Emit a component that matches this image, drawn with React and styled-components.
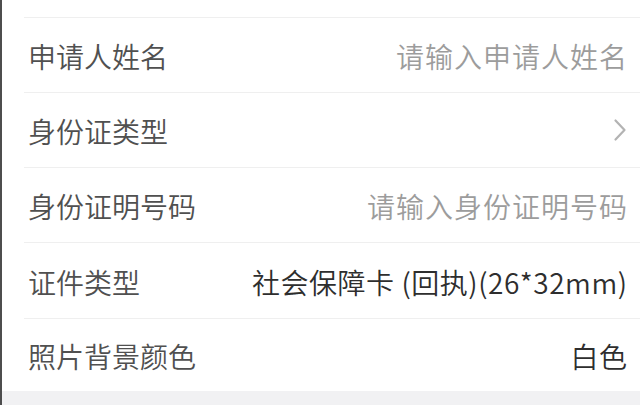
import React from "react";
import styled, { createGlobalStyle } from "styled-components";

const Global = createGlobalStyle`
  html, body { margin: 0; padding: 0; background: #ffffff; }
  body { font-family: "Noto Sans CJK SC", "Noto Sans", sans-serif; }
`;

const Page = styled.div`
  width: 640px;
  height: 405px;
  box-sizing: border-box;
  border-left: 2px solid #4d4d4d;
  background: #ffffff;
  display: flex;
  flex-direction: column;
  overflow: hidden;
`;

const TopGap = styled.div`
  height: 17px;
  flex: none;
`;

const List = styled.div`
  display: flex;
  flex-direction: column;
  margin-left: 22px;
`;

const Row = styled.div`
  height: ${(p) => p.$h || 75}px;
  flex: none;
  box-sizing: border-box;
  border-top: 1px solid #efefef;
  display: flex;
  align-items: center;
  justify-content: space-between;
  padding: 2px 13px 0 4px;
`;

const Label = styled.span`
  font-size: 28px;
  font-weight: 350;
  color: #505050;
  white-space: nowrap;
`;

const Value = styled.span`
  font-size: 28px;
  font-weight: 350;
  letter-spacing: ${(p) => (p.$placeholder ? "1px" : "0.55px")};
  margin-right: ${(p) => (p.$placeholder ? "-1px" : "-0.55px")};
  color: ${(p) => (p.$placeholder ? "#9c9c9c" : "#2e2e2e")};
  white-space: nowrap;
`;

const Chevron = styled.svg`
  width: 14px;
  height: 24px;
  margin-top: -2px;
`;

const Footer = styled.div`
  flex: 1;
  background: #f1f1f3;
`;

export default function App() {
  return (
    <>
      <Global />
      <Page>
        <TopGap />
        <List>
          <Row>
            <Label>申请人姓名</Label>
            <Value $placeholder>请输入申请人姓名</Value>
          </Row>
          <Row>
            <Label>身份证类型</Label>
            <Chevron viewBox="0 0 14 24">
              <path d="M2.5 2.5 L11.5 12 L2.5 21.5" fill="none" stroke="#b3b3b3" strokeWidth="2.2" strokeLinecap="round" strokeLinejoin="round" />
            </Chevron>
          </Row>
          <Row>
            <Label>身份证明号码</Label>
            <Value $placeholder>请输入身份证明号码</Value>
          </Row>
          <Row $h={76}>
            <Label>证件类型</Label>
            <Value>社会保障卡 (回执)(26*32mm)</Value>
          </Row>
          <Row $h={73}>
            <Label>照片背景颜色</Label>
            <Value>白色</Value>
          </Row>
        </List>
        <Footer />
      </Page>
    </>
  );
}
